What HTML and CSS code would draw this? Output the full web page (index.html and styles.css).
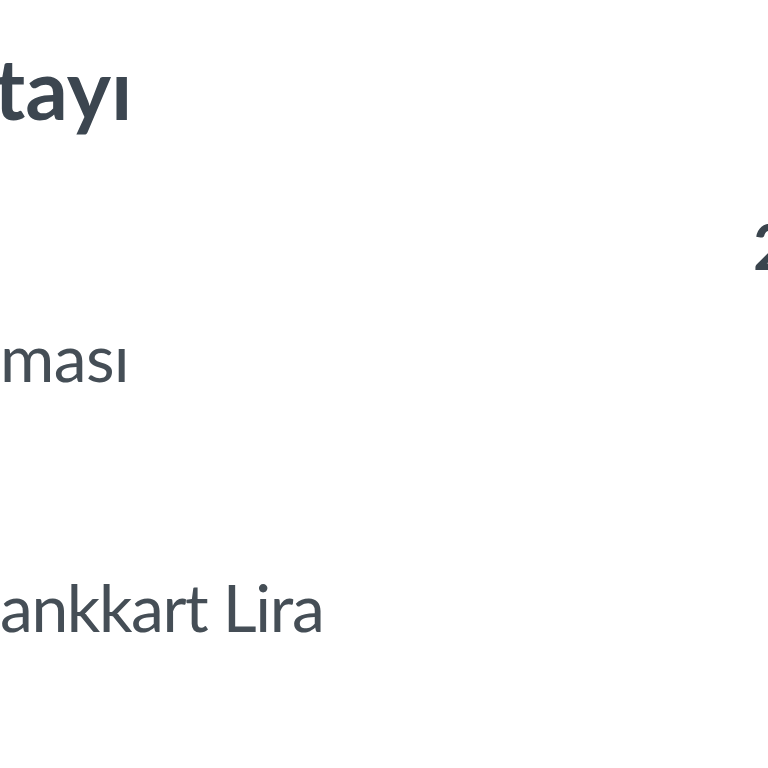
FILE: index.html
```html
<!DOCTYPE html>
<html lang="tr">
<head>
<meta charset="utf-8">
<link rel="stylesheet" href="styles.css">
</head>
<body>
<main class="page">
  <h1 class="title">tayı</h1>
  <div class="row row-amount">
    <span class="label"></span>
    <span class="value">2</span>
  </div>
  <div class="row row-desc">
    <span class="label">ması</span>
  </div>
  <div class="row row-account">
    <span class="label label-account">ankkart Lira</span>
  </div>
</main>
</body>
</html>
```
FILE: styles.css
```css
html, body {
  margin: 0;
  padding: 0;
  background: #ffffff;
  width: 768px;
  height: 768px;
  overflow: hidden;
}
.page {
  font-family: Lato, "Open Sans", sans-serif;
  color: #3c4650;
  display: flex;
  flex-direction: column;
}
.title {
  margin: 0;
  margin-left: -6px;
  font-size: 84px;
  font-weight: 700;
  line-height: 1;
  padding-top: 46px;
}
.row {
  display: flex;
  justify-content: space-between;
  align-items: baseline;
}
.label {
  font-size: 66px;
  font-weight: 400;
  letter-spacing: -0.6px;
  color: #454e56;
}
.label-account {
  letter-spacing: -1.4px;
}
.row-amount {
  margin-top: 77px;
  height: 60px;
}
.value {
  font-size: 64px;
  font-weight: 700;
  margin-right: -22px;
  color: #3a444d;
}
.row-desc {
  margin-top: 50px;
}
.row-account {
  margin-top: 171px;
}
```
